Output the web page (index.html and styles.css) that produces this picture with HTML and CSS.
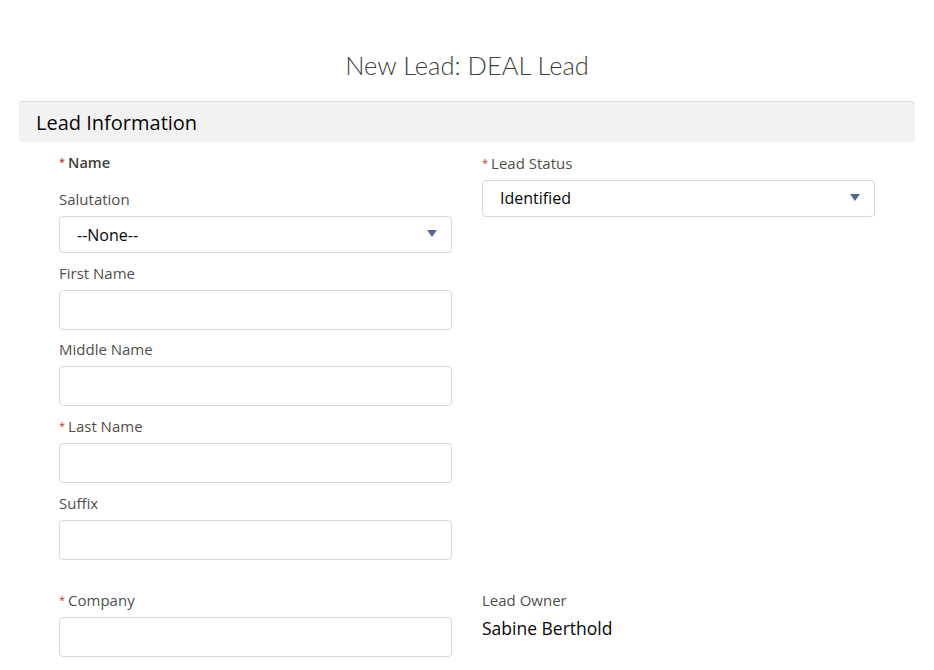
FILE: index.html
```html
<!DOCTYPE html>
<html lang="en">
<head>
<meta charset="utf-8">
<title>New Lead: DEAL Lead</title>
<link rel="stylesheet" href="styles.css">
</head>
<body>
<div class="page">
  <h1 class="title">New Lead: DEAL Lead</h1>
  <section class="section">
    <h2 class="section-head">Lead Information</h2>
    <div class="row">
      <div class="col">
        <div class="group-label"><span class="req">*</span>Name</div>
        <div class="field">
          <label class="label">Salutation</label>
          <div class="select"><span>--None--</span><span class="arrow"></span></div>
        </div>
        <div class="field">
          <label class="label">First Name</label>
          <div class="input"></div>
        </div>
        <div class="field">
          <label class="label">Middle Name</label>
          <div class="input"></div>
        </div>
        <div class="field">
          <label class="label"><span class="req">*</span>Last Name</label>
          <div class="input"></div>
        </div>
        <div class="field">
          <label class="label">Suffix</label>
          <div class="input"></div>
        </div>
      </div>
      <div class="col">
        <div class="field first">
          <label class="label"><span class="req">*</span>Lead Status</label>
          <div class="select"><span>Identified</span><span class="arrow"></span></div>
        </div>
      </div>
    </div>
    <div class="row row2">
      <div class="col">
        <div class="field">
          <label class="label"><span class="req">*</span>Company</label>
          <div class="input"></div>
        </div>
      </div>
      <div class="col">
        <div class="field">
          <label class="label">Lead Owner</label>
          <div class="value">Sabine Berthold</div>
        </div>
      </div>
    </div>
  </section>
</div>
</body>
</html>
```
FILE: styles.css
```css
* { box-sizing: border-box; }
html, body { margin: 0; padding: 0; background: #fff; }
body {
  font-family: "Open Sans", Lato, Arial, sans-serif;
  color: #080707;
}
.page { padding: 50px 19px 0; }
.title {
  margin: 0;
  text-align: center;
  font-family: Lato, "Open Sans", sans-serif;
  font-size: 25.5px;
  line-height: 30px;
  font-weight: 300;
  color: #3e3e3c;
}
.section { margin-top: 21px; }
.section-head {
  margin: 0;
  height: 41px;
  padding: 0 17px;
  display: flex;
  align-items: center;
  background: #f3f2f2;
  border-top: 1px solid #dddbda;
  border-radius: 4px;
  font-size: 20px;
  font-weight: 400;
  color: #080707;
}
.row {
  display: grid;
  grid-template-columns: 1fr 1fr;
  column-gap: 30px;
  padding: 0 40px;
}
.row2 { margin-top: 21px; }
.group-label {
  margin-top: 12px;
  margin-bottom: 7.5px;
  line-height: 18px;
  font-size: 14.5px;
  font-weight: 600;
  color: #3e3e3c;
}
.field { display: flex; flex-direction: column; }
.field.first { margin-top: 1px; }
.label {
  display: block;
  padding-top: 10.67px;
  margin-bottom: 8px;
  line-height: 18px;
  font-size: 15px;
  color: #514f4d;
}
.req {
  color: #c23934;
  font-size: 11px;
  line-height: 0;
  margin-right: 3px;
  position: relative;
  top: -2px;
}
.input {
  height: 40px;
  border: 1px solid #d8d8d8;
  border-radius: 4px;
  background: #fff;
}
.select {
  height: 37px;
  border: 1px solid #d8d8d8;
  border-radius: 4px;
  background: #fff;
  display: flex;
  align-items: center;
  justify-content: space-between;
  padding: 0 14px 0 17px;
  font-size: 16px;
  color: #080707;
}
.arrow {
  width: 0;
  height: 0;
  border-left: 5px solid transparent;
  border-right: 5px solid transparent;
  border-top: 7px solid #54698d;
  margin-top: -2px;
}
.value {
  font-size: 17.5px;
  line-height: 22px;
  color: #080707;
  margin-top: 0px;
}
```
